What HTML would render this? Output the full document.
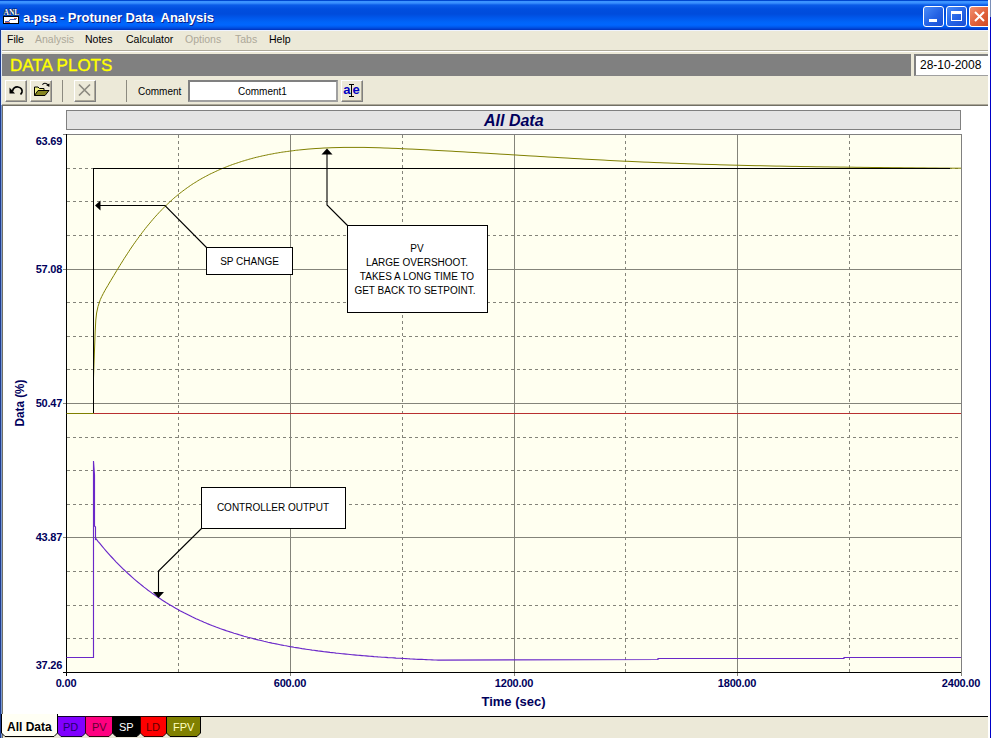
<!DOCTYPE html>
<html><head><meta charset="utf-8"><style>
*{box-sizing:border-box}
html,body{margin:0;padding:0;width:991px;height:738px;overflow:hidden;background:#ECE9D8;font-family:"Liberation Sans",sans-serif}
.a{position:absolute}
#title{left:0;top:0;width:988px;height:30px;background:linear-gradient(to bottom,#0047D0 0px,#0047D0 1px,#3D95FF 1px,#3A90FF 3px,#0A5CE8 5px,#004EDE 9px,#004CDC 14px,#0058EC 18px,#0064F8 22px,#0066FF 25px,#0058EC 27px,#0040D0 29px,#0030B8 30px)}
#ttext{left:23px;top:10px;font-size:13px;font-weight:bold;color:#fff;white-space:pre;text-shadow:1px 1px 0 #0A1F8A}
.tb{top:6px;width:21px;height:21px;border:1px solid #fff;border-radius:3px}
.mi{top:33px;font-size:10.5px;color:#000;white-space:pre}
.dis{color:#ACA899}
.btn{width:22px;height:22px;border:1px solid;border-color:#fff #808080 #808080 #fff;box-shadow:inset -1px -1px 0 #ACA899}
</style></head><body>
<div class="a" id="title"></div>
<div class="a" style="left:0;top:30px;width:988px;height:1px;background:#F0F4FF"></div>
<svg class="a" style="left:2px;top:7px" width="18" height="18">
<rect x="1.5" y="9.5" width="15" height="7" fill="#fff" stroke="#000"/>
<path d="M3,14.5 H7 L8,12.5 H14" stroke="#4060C0" fill="none"/>
<path d="M3,15.5 H8 M12,11.5 H15" stroke="#D06060" fill="none"/>
<text x="1.5" y="7.5" font-family="Liberation Serif" font-size="7.5" font-weight="bold" fill="#fff" stroke="#000" stroke-width="0.6" paint-order="stroke" letter-spacing="0">ANL</text>
</svg>
<div class="a" id="ttext">a.psa - Protuner Data  Analysis</div>
<div class="a tb" style="left:923px;background:linear-gradient(135deg,#4A8CF8,#2462E4 55%,#1A4FD4)"><div class="a" style="left:5px;top:12px;width:8px;height:3px;background:#fff"></div></div>
<div class="a tb" style="left:946px;background:linear-gradient(135deg,#4A8CF8,#2462E4 55%,#1A4FD4)"><div class="a" style="left:4px;top:4px;width:11px;height:10px;border:1px solid #fff;border-top-width:3px"></div></div>
<div class="a tb" style="left:969px;width:20px;border-right:none;border-radius:3px 0 0 3px;background:linear-gradient(135deg,#F29070,#E0603A 55%,#CC4A22)">
<svg class="a" style="left:3px;top:3px" width="13" height="13"><path d="M2,2 L11,11 M11,2 L2,11" stroke="#fff" stroke-width="2"/></svg></div>
<div class="a" style="left:988px;top:0;width:2px;height:738px;background:#fff"></div>
<div class="a" style="left:990px;top:0;width:1px;height:17px;background:#7A8EB8"></div>
<div class="a" style="left:990px;top:17px;width:1px;height:721px;background:#0000C8"></div>
<div class="a" style="left:0;top:30px;width:1px;height:708px;background:#1E3C90"></div>
<div class="a" style="left:1px;top:31px;width:1px;height:74px;background:#DDE8F8"></div>
<div class="a" style="left:1px;top:105px;width:1px;height:633px;background:#7A9AD0"></div>
<div class="a mi" style="left:7px">File</div>
<div class="a mi dis" style="left:35px">Analysis</div>
<div class="a mi" style="left:85px">Notes</div>
<div class="a mi" style="left:126px">Calculator</div>
<div class="a mi dis" style="left:185px">Options</div>
<div class="a mi dis" style="left:235px">Tabs</div>
<div class="a mi" style="left:269px">Help</div>
<div class="a" style="left:2px;top:50px;width:986px;height:1px;background:#ACA899"></div>
<div class="a" style="left:2px;top:51px;width:986px;height:1px;background:#fff"></div>
<div class="a" style="left:2px;top:54px;width:909px;height:22px;background:#808080"></div>
<div class="a" style="left:10px;top:56px;font-size:17px;color:#FFFF00;-webkit-text-stroke:0.35px #FFFF00;white-space:pre">DATA PLOTS</div>
<div class="a" style="left:914px;top:54px;width:74px;height:22px;background:#fff;border-top:2px solid #808080;border-left:2px solid #808080;border-bottom:1px solid #A0A0A0"></div>
<div class="a" style="left:920px;top:58px;font-size:12px;color:#000;white-space:pre">28-10-2008</div>
<!-- toolbar -->
<div class="a btn" style="left:5px;top:80px"></div>
<div class="a btn" style="left:30px;top:80px"></div>
<div class="a" style="left:62px;top:80px;height:22px;background:#8C8A80;width:1px"></div>
<div class="a btn" style="left:74px;top:80px"></div>
<div class="a" style="left:126px;top:80px;height:22px;background:#8C8A80;width:1px"></div>
<svg class="a" style="left:0;top:76px" width="100" height="30">
<path d="M12.5,15 C13.5,11.5 16,10.8 18,11 C21,11.3 22.5,13.5 22,16 C21.7,17.2 21,18 20.5,18.5" fill="none" stroke="#000" stroke-width="1.7"/>
<path d="M9.5,11.5 L9.5,17.5 L15,17.5 Z" fill="#000"/>
<path d="M34.5,19.5 V11 H38 L39.5,12.5 H44 V15" fill="#F0F080" stroke="#000" stroke-width="1"/>
<path d="M34.5,19.5 L38,14.5 H49 L45,19.5 Z" fill="#848420" stroke="#000" stroke-width="1"/>
<path d="M42.5,8.8 C43.5,7 46,6.6 47.8,8.6" fill="none" stroke="#000" stroke-width="1.1"/>
<path d="M46,9 L49.5,7.5 L49.3,11 Z" fill="#000"/>
<path d="M79,8.5 L90,19.5 M90,8.5 L79,19.5" stroke="#8C8A80" stroke-width="1.7"/>
</svg>
<div class="a" style="left:138px;top:85.5px;font-size:10px;color:#000;white-space:pre">Comment</div>
<div class="a" style="left:188px;top:80px;width:150px;height:22px;background:#fff;border:2px solid;border-color:#808080 #A0A0A0 #A0A0A0 #808080"></div>
<div class="a" style="left:238px;top:85.5px;font-size:10px;color:#000;white-space:pre">Comment1</div>
<div class="a btn" style="left:341px;top:80px"></div>
<svg class="a" style="left:335px;top:76px" width="35" height="30">
<text x="8.2" y="18.3" font-family="Liberation Sans" font-size="13" font-weight="bold" fill="#0000C0">a</text>
<text x="17.5" y="18.3" font-family="Liberation Sans" font-size="13" font-weight="bold" fill="#0000C0">e</text>
<path d="M16.5,8.5 V20.5 M14,8.5 H19 M14,20.5 H19" stroke="#000" stroke-width="1" fill="none" shape-rendering="crispEdges"/>
</svg>
<div class="a" style="left:2px;top:104px;width:986px;height:1px;background:#ACA899"></div>
<div class="a" style="left:2px;top:105px;width:986px;height:1px;background:#716F64"></div>
<div class="a" style="left:2px;top:105px;width:1px;height:633px;background:#716F64"></div>
<div class="a" style="left:3px;top:106px;width:985px;height:610px;background:#fff"></div>
<div class="a" style="left:66px;top:110px;width:895px;height:20px;background:#E4E4E4;border:1px solid #808080"></div>
<div class="a" style="left:484px;top:112px;font-size:16px;font-weight:bold;font-style:italic;color:#00005C;white-space:pre">All Data</div>
<svg width="991" height="738" style="position:absolute;left:0;top:0">
<rect x="66" y="134" width="895" height="538" fill="#FFFFF0"/>
<g shape-rendering="crispEdges">
<line x1="67" y1="168.5" x2="961" y2="168.5" stroke="#84847A" stroke-dasharray="3 3"/><line x1="67" y1="201.5" x2="961" y2="201.5" stroke="#84847A" stroke-dasharray="3 3"/><line x1="67" y1="235.5" x2="961" y2="235.5" stroke="#84847A" stroke-dasharray="3 3"/><line x1="63" y1="269.5" x2="961" y2="269.5" stroke="#84847A"/><line x1="67" y1="302.5" x2="961" y2="302.5" stroke="#84847A" stroke-dasharray="3 3"/><line x1="67" y1="336.5" x2="961" y2="336.5" stroke="#84847A" stroke-dasharray="3 3"/><line x1="67" y1="369.5" x2="961" y2="369.5" stroke="#84847A" stroke-dasharray="3 3"/><line x1="63" y1="403.5" x2="961" y2="403.5" stroke="#84847A"/><line x1="67" y1="437.5" x2="961" y2="437.5" stroke="#84847A" stroke-dasharray="3 3"/><line x1="67" y1="470.5" x2="961" y2="470.5" stroke="#84847A" stroke-dasharray="3 3"/><line x1="67" y1="504.5" x2="961" y2="504.5" stroke="#84847A" stroke-dasharray="3 3"/><line x1="63" y1="537.5" x2="961" y2="537.5" stroke="#84847A"/><line x1="67" y1="571.5" x2="961" y2="571.5" stroke="#84847A" stroke-dasharray="3 3"/><line x1="67" y1="605.5" x2="961" y2="605.5" stroke="#84847A" stroke-dasharray="3 3"/><line x1="67" y1="638.5" x2="961" y2="638.5" stroke="#84847A" stroke-dasharray="3 3"/><line x1="178.5" y1="135" x2="178.5" y2="672" stroke="#84847A" stroke-dasharray="3 3"/><line x1="290.5" y1="134" x2="290.5" y2="676" stroke="#84847A"/><line x1="402.5" y1="135" x2="402.5" y2="672" stroke="#84847A" stroke-dasharray="3 3"/><line x1="514.5" y1="134" x2="514.5" y2="676" stroke="#84847A"/><line x1="625.5" y1="135" x2="625.5" y2="672" stroke="#84847A" stroke-dasharray="3 3"/><line x1="737.5" y1="134" x2="737.5" y2="676" stroke="#84847A"/><line x1="849.5" y1="135" x2="849.5" y2="672" stroke="#84847A" stroke-dasharray="3 3"/>
<line x1="63" y1="134.5" x2="962" y2="134.5" stroke="#808080"/>
<line x1="961.5" y1="134" x2="961.5" y2="672" stroke="#808080"/>
<line x1="63" y1="672.5" x2="962" y2="672.5" stroke="#000"/>
<line x1="66.5" y1="134" x2="66.5" y2="676" stroke="#000"/>
<line x1="961.5" y1="672" x2="961.5" y2="676" stroke="#84847A"/>
<line x1="93" y1="413.5" x2="961" y2="413.5" stroke="#B83030"/>
</g>
<path d="M66.5,413.5 L93.5,413.5 L93.5,378.0 L94.5,350.0 L95.2,331.0 L95.8,320.0 L96.6,313.0 L98.0,306.5 L100.3,299.6 L101.8,296.4 L103.3,293.5 L104.8,290.7 L106.3,288.1 L107.8,285.6 L109.3,283.0 L110.8,280.5 L112.3,278.0 L113.8,275.5 L115.3,273.0 L116.8,270.5 L118.3,268.1 L119.8,265.6 L121.3,263.2 L122.8,260.8 L124.3,258.4 L125.8,256.1 L127.3,253.8 L128.8,251.5 L130.3,249.2 L131.8,247.0 L133.3,244.8 L134.8,242.7 L136.3,240.6 L137.8,238.5 L139.3,236.5 L140.8,234.5 L142.3,232.5 L143.8,230.5 L145.3,228.6 L146.8,226.7 L148.3,224.9 L149.8,223.1 L151.3,221.3 L152.8,219.5 L154.3,217.8 L155.8,216.1 L157.3,214.5 L158.8,212.8 L160.3,211.3 L161.8,209.7 L163.3,208.2 L164.8,206.7 L166.3,205.2 L167.8,203.8 L169.3,202.4 L170.8,201.0 L172.3,199.6 L173.8,198.3 L175.3,197.0 L176.8,195.8 L178.3,194.5 L179.8,193.3 L181.3,192.2 L182.8,191.0 L184.3,189.9 L185.8,188.8 L187.3,187.7 L188.8,186.7 L190.3,185.6 L191.8,184.6 L193.3,183.6 L194.8,182.7 L196.3,181.8 L197.8,180.8 L199.3,179.9 L200.8,179.1 L202.3,178.2 L203.8,177.4 L205.3,176.6 L206.8,175.8 L208.3,175.0 L209.8,174.2 L211.3,173.5 L212.8,172.8 L214.3,172.1 L215.8,171.4 L217.3,170.7 L218.8,170.0 L220.3,169.4 L221.8,168.7 L223.3,168.1 L224.8,167.5 L226.3,166.9 L227.8,166.3 L229.3,165.7 L230.8,165.2 L232.3,164.6 L233.8,164.1 L235.3,163.6 L236.8,163.1 L238.3,162.6 L239.8,162.1 L241.3,161.6 L242.8,161.1 L244.3,160.7 L245.8,160.2 L247.3,159.8 L248.8,159.3 L250.3,158.9 L251.8,158.5 L253.3,158.1 L254.8,157.7 L256.3,157.3 L257.8,157.0 L259.3,156.6 L260.8,156.3 L262.3,155.9 L263.8,155.6 L265.3,155.3 L266.8,155.0 L268.3,154.6 L269.8,154.3 L271.3,154.1 L272.8,153.8 L274.3,153.5 L275.8,153.2 L277.3,153.0 L278.8,152.7 L280.3,152.5 L281.8,152.2 L283.3,152.0 L284.8,151.8 L286.3,151.6 L287.8,151.4 L289.3,151.2 L290.8,151.0 L292.3,150.8 L293.8,150.6 L295.3,150.4 L296.8,150.2 L298.3,150.1 L299.8,149.9 L300.0,149.9 L304.0,149.5 L308.0,149.1 L312.0,148.8 L316.0,148.5 L320.0,148.3 L324.0,148.0 L328.0,147.9 L332.0,147.7 L336.0,147.6 L340.0,147.5 L344.0,147.4 L348.0,147.4 L352.0,147.4 L356.0,147.4 L360.0,147.4 L364.0,147.4 L368.0,147.5 L372.0,147.6 L376.0,147.7 L380.0,147.8 L384.0,148.0 L388.0,148.1 L392.0,148.3 L396.0,148.4 L400.0,148.6 L404.0,148.8 L408.0,149.0 L412.0,149.1 L416.0,149.3 L420.0,149.5 L424.0,149.7 L428.0,149.9 L432.0,150.2 L436.0,150.4 L440.0,150.6 L444.0,150.8 L448.0,151.0 L452.0,151.2 L456.0,151.5 L460.0,151.7 L464.0,151.9 L468.0,152.2 L472.0,152.4 L476.0,152.6 L480.0,152.9 L484.0,153.1 L488.0,153.3 L492.0,153.6 L496.0,153.8 L500.0,154.1 L504.0,154.3 L508.0,154.5 L512.0,154.8 L516.0,155.0 L520.0,155.3 L524.0,155.5 L528.0,155.8 L532.0,156.0 L536.0,156.2 L540.0,156.5 L544.0,156.7 L548.0,157.0 L552.0,157.2 L556.0,157.4 L560.0,157.7 L564.0,157.9 L568.0,158.1 L572.0,158.4 L576.0,158.6 L580.0,158.8 L584.0,159.1 L588.0,159.3 L592.0,159.5 L596.0,159.7 L600.0,159.9 L604.0,160.1 L608.0,160.4 L612.0,160.6 L616.0,160.8 L620.0,161.0 L624.0,161.2 L628.0,161.3 L632.0,161.5 L636.0,161.7 L640.0,161.9 L644.0,162.1 L648.0,162.2 L652.0,162.4 L656.0,162.6 L660.0,162.7 L664.0,162.9 L668.0,163.0 L672.0,163.2 L676.0,163.3 L680.0,163.5 L684.0,163.6 L688.0,163.8 L692.0,163.9 L696.0,164.0 L700.0,164.2 L704.0,164.3 L708.0,164.4 L712.0,164.5 L716.0,164.6 L720.0,164.8 L724.0,164.9 L728.0,165.0 L732.0,165.1 L736.0,165.2 L740.0,165.3 L744.0,165.4 L748.0,165.5 L752.0,165.6 L756.0,165.7 L760.0,165.7 L764.0,165.8 L768.0,165.9 L772.0,166.0 L776.0,166.1 L780.0,166.1 L784.0,166.2 L788.0,166.3 L792.0,166.4 L796.0,166.4 L800.0,166.5 L804.0,166.6 L808.0,166.6 L812.0,166.7 L816.0,166.8 L820.0,166.8 L824.0,166.9 L828.0,166.9 L832.0,167.0 L836.0,167.0 L840.0,167.1 L844.0,167.1 L848.0,167.2 L852.0,167.2 L856.0,167.3 L860.0,167.3 L864.0,167.4 L868.0,167.4 L872.0,167.5 L876.0,167.5 L880.0,167.5 L884.0,167.6 L888.0,167.6 L892.0,167.7 L896.0,167.7 L900.0,167.7 L904.0,167.8 L908.0,167.8 L912.0,167.8 L916.0,167.9 L920.0,167.9 L924.0,167.9 L928.0,168.0 L932.0,168.0 L936.0,168.0 L940.0,168.1 L944.0,168.1 L948.0,168.1 L952.0,168.2 L956.0,168.2 L960.0,168.2 L961.0,168.2" fill="none" stroke="#808000" stroke-width="1"/>
<path d="M66.5,657.5 L93.5,657.5 L93.5,461.0 L94.5,475.0 L94.5,526.0 L95.5,527.0 L95.5,540.0 L96.0,538.7 L98.0,541.3 L100.0,543.7 L102.0,546.1 L104.0,548.5 L106.0,550.8 L108.0,553.1 L110.0,555.3 L112.0,557.5 L114.0,559.7 L116.0,561.8 L118.0,563.8 L120.0,565.8 L122.0,567.8 L124.0,569.8 L126.0,571.6 L128.0,573.5 L130.0,575.3 L132.0,577.1 L134.0,578.9 L136.0,580.6 L138.0,582.3 L140.0,583.9 L142.0,585.5 L144.0,587.1 L146.0,588.6 L148.0,590.2 L150.0,591.6 L152.0,593.1 L154.0,594.5 L156.0,595.9 L158.0,597.3 L160.0,598.6 L162.0,599.9 L164.0,601.2 L166.0,602.5 L168.0,603.7 L170.0,604.9 L172.0,606.1 L174.0,607.3 L176.0,608.4 L178.0,609.6 L180.0,610.7 L182.0,611.7 L184.0,612.8 L186.0,613.8 L188.0,614.8 L190.0,615.8 L192.0,616.8 L194.0,617.7 L196.0,618.7 L198.0,619.6 L200.0,620.5 L202.0,621.3 L204.0,622.2 L206.0,623.0 L208.0,623.9 L210.0,624.7 L212.0,625.5 L214.0,626.2 L216.0,627.0 L218.0,627.7 L220.0,628.5 L222.0,629.2 L224.0,629.9 L226.0,630.6 L228.0,631.2 L230.0,631.9 L232.0,632.5 L234.0,633.2 L236.0,633.8 L238.0,634.4 L240.0,635.0 L242.0,635.6 L244.0,636.2 L246.0,636.7 L248.0,637.3 L250.0,637.8 L252.0,638.3 L254.0,638.9 L256.0,639.4 L258.0,639.9 L260.0,640.3 L262.0,640.8 L264.0,641.3 L266.0,641.7 L268.0,642.2 L270.0,642.6 L272.0,643.1 L274.0,643.5 L276.0,643.9 L278.0,644.3 L280.0,644.7 L282.0,645.1 L284.0,645.5 L286.0,645.8 L288.0,646.2 L290.0,646.6 L292.0,646.9 L294.0,647.3 L296.0,647.6 L298.0,647.9 L300.0,648.2 L302.0,648.6 L304.0,648.9 L306.0,649.2 L308.0,649.5 L310.0,649.8 L312.0,650.1 L314.0,650.3 L316.0,650.6 L318.0,650.9 L320.0,651.1 L322.0,651.4 L324.0,651.7 L326.0,651.9 L328.0,652.1 L330.0,652.4 L332.0,652.6 L334.0,652.8 L336.0,653.1 L338.0,653.3 L340.0,653.5 L342.0,653.7 L344.0,653.9 L346.0,654.1 L348.0,654.3 L350.0,654.5 L352.0,654.7 L354.0,654.9 L356.0,655.1 L358.0,655.3 L360.0,655.4 L362.0,655.6 L364.0,655.8 L366.0,655.9 L368.0,656.1 L370.0,656.3 L372.0,656.4 L374.0,656.6 L376.0,656.7 L378.0,656.9 L380.0,657.0 L382.0,657.2 L384.0,657.3 L386.0,657.4 L388.0,657.6 L390.0,657.7 L392.0,657.8 L394.0,657.9 L396.0,658.1 L398.0,658.2 L400.0,658.3 L402.0,658.4 L404.0,658.5 L406.0,658.6 L408.0,658.7 L410.0,658.9 L412.0,659.0 L414.0,659.1 L416.0,659.2 L418.0,659.3 L420.0,659.3 L422.0,659.4 L424.0,659.5 L426.0,659.6 L428.0,659.7 L430.0,659.8 L432.0,659.9 L434.0,660.0 L436.0,660.0 L438.0,660.1 L658.0,659.5 L658.0,658.5 L844.0,658.5 L844.0,657.5 L961.0,657.5" fill="none" stroke="#6A28C8" stroke-width="1.15"/>
<g shape-rendering="crispEdges">
<path d="M93.5,413 V168.5 H950" fill="none" stroke="#000" stroke-width="1.3"/>
</g>
<!-- annotations -->
<g stroke="#000" fill="none" stroke-width="1.1">
<path d="M206.5,247.5 L165,205.5 H99"/>
<path d="M347.5,225.5 L327,205 V153"/>
<path d="M201.5,528.5 L158.5,571 V592"/>
</g>
<g fill="#000">
<path d="M95,205.5 L100.5,200.5 L100.5,210.5 Z"/>
<path d="M327,148.5 L321.5,154.5 L332.5,154.5 Z"/>
<path d="M158.5,598 L153,592 L164,592 Z"/>
</g>
<g shape-rendering="crispEdges">
<rect x="206.5" y="247.5" width="86" height="27" fill="#fff" stroke="#000" stroke-width="1.2"/>
<rect x="347.5" y="225.5" width="140" height="87" fill="#fff" stroke="#000" stroke-width="1.2"/>
<rect x="201.5" y="487.5" width="144" height="41" fill="#fff" stroke="#000" stroke-width="1.2"/>
</g>
<g font-family="Liberation Sans" font-size="10" fill="#000" text-anchor="middle">
<text x="249.5" y="265">SP CHANGE</text>
<text x="417" y="251.5">PV</text>
<text x="417" y="265.5">LARGE OVERSHOOT.</text>
<text x="417" y="279.5">TAKES A LONG TIME TO</text>
<text x="415" y="293.5">GET BACK TO SETPOINT.</text>
<text x="273" y="511">CONTROLLER OUTPUT</text>
</g>
<g font-family="Liberation Sans" font-size="11" font-weight="bold" fill="#00005C" text-anchor="end" letter-spacing="-0.25">
<text x="62" y="145">63.69</text>
<text x="62" y="273">57.08</text>
<text x="62" y="407">50.47</text>
<text x="62" y="541">43.87</text>
<text x="62" y="669">37.26</text>
</g>
<g font-family="Liberation Sans" font-size="11" font-weight="bold" fill="#00005C" text-anchor="middle" letter-spacing="-0.2">
<text x="66" y="687">0.00</text>
<text x="290" y="687">600.00</text>
<text x="514" y="687">1200.00</text>
<text x="737" y="687">1800.00</text>
<text x="961" y="687">2400.00</text>
</g>
<text x="513.5" y="706" font-family="Liberation Sans" font-size="13" font-weight="bold" fill="#00005C" text-anchor="middle">Time (sec)</text>
<text transform="translate(24,403) rotate(-90) scale(0.9,1)" font-family="Liberation Sans" font-size="13" font-weight="bold" fill="#00005C" text-anchor="middle">Data (%)</text>
</svg>
<!-- tabs -->
<div class="a" style="left:3px;top:716px;width:985px;height:22px;background:#ECE9D8"></div>
<div class="a" style="left:57px;top:716px;width:931px;height:1px;background:#000"></div>
<svg class="a" style="left:0;top:714px" width="220" height="24">
<path d="M57.5,2.5 H85.5 V19 L82,22.5 H61 L57.5,19 Z" fill="#8000FF" stroke="#100030"/>
<path d="M85.5,2.5 H112.5 V19 L109,22.5 H89 L85.5,19 Z" fill="#FF0080" stroke="#300010"/>
<path d="M112.5,2.5 H140.5 V19 L137,22.5 H116 L112.5,19 Z" fill="#000" stroke="#000"/>
<path d="M140.5,2.5 H166.5 V19 L163,22.5 H144 L140.5,19 Z" fill="#FF0000" stroke="#300000"/>
<path d="M166.5,2.5 H200.5 V19 L197,22.5 H170 L166.5,19 Z" fill="#808000" stroke="#000"/>
<path d="M1.5,-1 V19 L5,22.5 H54 L57.5,19 V-1 Z" fill="#FFFFF4" stroke="#000"/>
<rect x="2" y="-1" width="55" height="3" fill="#FFFFF4"/>
<line x1="2.5" y1="2" x2="2.5" y2="19" stroke="#fff"/>
</svg>
<div class="a" style="left:7px;top:719.5px;font-size:12px;font-weight:bold;color:#000;white-space:pre">All Data</div>
<div class="a" style="left:63px;top:721px;font-size:11px;color:#200070;white-space:pre">PD</div>
<div class="a" style="left:92px;top:721px;font-size:11px;color:#600030;white-space:pre">PV</div>
<div class="a" style="left:119px;top:721px;font-size:11px;color:#fff;white-space:pre">SP</div>
<div class="a" style="left:146px;top:721px;font-size:11px;color:#600000;white-space:pre">LD</div>
<div class="a" style="left:173px;top:721px;font-size:11px;color:#FFFFC0;white-space:pre">FPV</div>
</body></html>
